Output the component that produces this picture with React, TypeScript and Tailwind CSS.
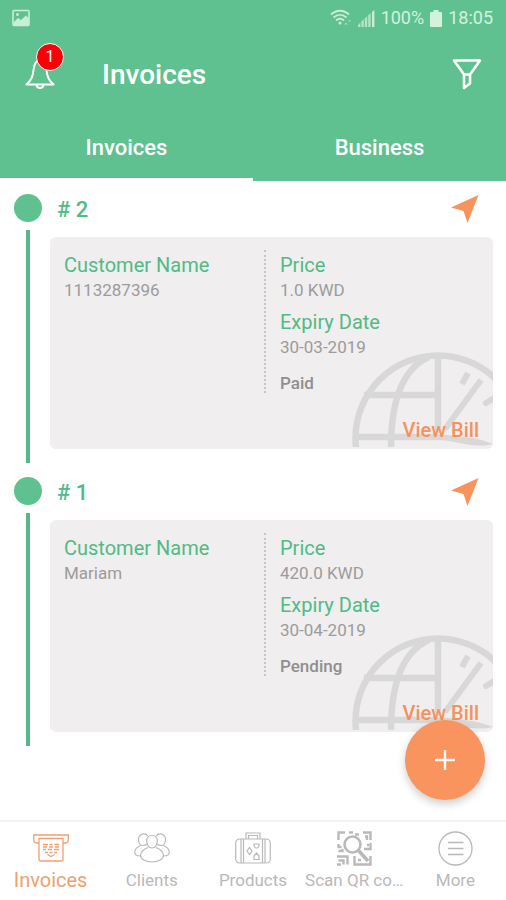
import { useState, type ReactNode } from "react";

type Invoice = {
  id: number;
  customer: string;
  price: string;
  expiry: string;
  status: string;
};

const invoices: Invoice[] = [
  { id: 2, customer: "1113287396", price: "1.0 KWD", expiry: "30-03-2019", status: "Paid" },
  { id: 1, customer: "Mariam", price: "420.0 KWD", expiry: "30-04-2019", status: "Pending" },
];

function PictureIcon() {
  return (
    <svg width="18" height="18" viewBox="0 0 18 18" fill="none" aria-hidden="true">
      <rect x="1" y="1.5" width="16" height="15" rx="1" stroke="#c9eed6" strokeWidth="1.6" />
      <path d="M2 13l4-4 3 2 5-4.500 3 3V16H2z" fill="#c9eed6" />
      <circle cx="5.500" cy="5.500" r="1.500" fill="#c9eed6" />
    </svg>
  );
}

function WifiIcon() {
  return (
    <svg width="22" height="18" viewBox="0 0 22 18" fill="none" stroke="#c9eed6" strokeWidth="1.800" aria-hidden="true">
      <path d="M1 5.500C6.500.500 13.500.500 19 5.500" />
      <path d="M3.500 8.500C7.500 5 12.500 5 16.500 8.500" />
      <path d="M6 11.500C8.500 9.300 11.500 9.300 14 11.500" />
      <circle cx="10" cy="14" r="1.500" fill="#c9eed6" stroke="none" />
      <path d="M14 15.500l2-2 2 2zM18 12.500h3l-1.500-2z" fill="#a4dcb9" stroke="none" />
    </svg>
  );
}

function SignalIcon() {
  return (
    <svg width="17" height="17" viewBox="0 0 17 17" fill="#b4e4c6" aria-hidden="true">
      <path d="M0 17v-2l2.400-2.400V17zM3.400 17v-5.400l2.400-2.400V17zM6.800 17V8.600l2.400-2.400V17zM10.200 17V5.400L12.600 3v14z" />
      <path d="M14 17V2l2.400-2v17z" fill="#c9eed6" />
    </svg>
  );
}

function BatteryIcon() {
  return (
    <svg width="12" height="17" viewBox="0 0 12 17" fill="#d2f2dd" aria-hidden="true">
      <path d="M3.500 0h5v2H11a1 1 0 0 1 1 1v13a1 1 0 0 1-1 1H1a1 1 0 0 1-1-1V3a1 1 0 0 1 1-1h2.500z" />
    </svg>
  );
}

function BellIcon() {
  return (
    <svg width="30" height="32" viewBox="0 0 30 32" fill="none" stroke="#fff" strokeWidth="2" strokeLinejoin="round" aria-hidden="true">
      <path d="M15 1C10 1.500 9 6 8.500 11c-.500 7-2.500 10-7 14.500h27c-4.500-4.500-6.500-7.500-7-14.500-.500-5-1.500-9.500-6.500-10z" />
      <path d="M11.500 26c.500 4 6.500 4 7 0" />
    </svg>
  );
}

function FunnelIcon() {
  return (
    <svg width="30" height="32" viewBox="0 0 30 32" fill="none" stroke="#fff" strokeWidth="2.600" strokeLinejoin="round" aria-hidden="true">
      <path d="M2 1.500h26L18 15.500h-6z" />
      <path d="M12 15.500v13.500l6-4.500v-9" />
    </svg>
  );
}

function SendIcon() {
  return (
    <svg width="28" height="28" viewBox="0 0 28 28" fill="#f8935c" aria-hidden="true">
      <path d="M27.500 0L16.500 28 12.500 16 0 12.500z" />
    </svg>
  );
}

function GlobeArt() {
  return (
    <svg
      className="pointer-events-none absolute right-0 bottom-0.5"
      width="142"
      height="95"
      viewBox="0 0 142 95"
      fill="none"
      stroke="#d9d8d9"
      strokeWidth="6.500"
      aria-hidden="true"
    >
      <circle cx="87" cy="86" r="82.500" />
      <path d="M87 4v77M13 43h74M5 85h82" />
      <path d="M78 5C48 18 40 58 40 96" />
      <path d="M130 28L94 77" strokeWidth="6" />
      <path d="M117 21l-6 11" strokeWidth="6" />
      <path d="M135 51l8-5" strokeWidth="6" strokeLinecap="round" />
      <path d="M86 82c20 2 40 3 56 10-20 5-38-4-56-4z" fill="#d9d8d9" stroke="none" />
    </svg>
  );
}

function InvoiceNavIcon() {
  return (
    <svg width="36" height="28" viewBox="0 0 36 28" fill="none" stroke="currentColor" strokeWidth="1.300" aria-hidden="true">
      <path d="M6 9H3.500C1.500 9 .700 7.500 .700 5V1h34.600v4c0 2.500-.800 4-2.800 4H30" />
      <path d="M5.500 4.500h25M6 4.500v21a1.500 1.500 0 0 0 1.500 1.500h21a1.500 1.500 0 0 0 1.500-1.500v-21" />
      <path d="M10 10.500h5m1.500 0h3m2 0h4.500M10 13h4m2 0h4m2 0h4M10 15.500h3m2 0h4m2 0h5M12 18.500h3m1.500 0h3m1.500 0h3" />
      <path d="M14.500 20.500l3.500 2 3.500-2" />
    </svg>
  );
}

function ClientsIcon() {
  return (
    <svg width="36" height="30" viewBox="0 0 36 30" fill="none" stroke="currentColor" strokeWidth="1.200" aria-hidden="true">
      <path d="M18 2.500c4 0 5.500 2.500 5.300 5.500-.300 4-2.300 7-5.300 7s-5-3-5.300-7c-.200-3 1.300-5.500 5.300-5.500z" />
      <path d="M14 3C11.500-.500 4.500.500 4.500 6c0 3.500 1.500 6.500 4 6.500 2 0 3.500-.500 5-1.500M22 3c2.500-3.500 9.500-2.500 9.500 3 0 3.500-1.500 6.500-4 6.500-2 0-3.500-.500-5-1.500" />
      <path d="M14 14.500c-3.500 1.500-7.500 4-7.500 8 0 3.500 5 6.500 11.500 6.500s11.500-3 11.500-6.500c0-4-4-6.500-7.500-8" />
      <path d="M6.500 12.500C3 14 .700 16.500 .700 19.500c0 2.500 3 3.500 6 3.500M29.500 12.500c3.500 1.500 5.800 4 5.800 7 0 2.500-3 3.500-6 3.500" />
    </svg>
  );
}

function ProductsIcon() {
  return (
    <svg width="36" height="32" viewBox="0 0 36 32" fill="none" stroke="currentColor" strokeWidth="1.200" aria-hidden="true">
      <rect x=".700" y="7" width="34.600" height="24" rx="4" />
      <path d="M6 7v24M8.500 7v24M27.500 7v24M30 7v24" />
      <path d="M11 7V1h14v6M13.500 7V3.500h9V7" />
      <path d="M14.500 15.500l2.500 3.500-2.500 3.500L12 19zM19 12h5v2l-1.500 2h-2L19 14zM19 24l2.500-3 2.500 3v3.500h-5z" />
    </svg>
  );
}

function QrIcon() {
  return (
    <svg width="35" height="35" viewBox="0 0 35 35" fill="none" stroke="currentColor" strokeWidth="2.400" aria-hidden="true">
      <path d="M1.500 9V1.500H8M12 1.500h4M18 3.500h4M26 1.500h7.500V9M28 5.500h2V9M1.500 13v3h3M1.500 20h4v-2M33.500 12v6H27M30 14h2" />
      <path d="M0 25.500h10.500V33.500M0 33.500h4M1.500 29.500h5v4M17.500 25v8.500h16V25M21 29h3" />
      <circle cx="15.500" cy="13.500" r="8" strokeWidth="2.600" />
      <path d="M21 19l10 11" strokeWidth="3.600" />
    </svg>
  );
}

function MoreIcon() {
  return (
    <svg width="35" height="35" viewBox="0 0 35 35" fill="none" stroke="currentColor" strokeWidth="1.300" aria-hidden="true">
      <circle cx="17.500" cy="17.500" r="16.500" />
      <path d="M10 11.500h15.500M10 17.500h15.500M10 23.500h15.500" />
    </svg>
  );
}

function Field({ label, value }: { label: string; value: string }) {
  return (
    <div>
      <dt className="text-xl leading-[30px] text-[#50bb86]">{label}</dt>
      <dd className="text-[17px] leading-5 text-[#9c9b9c]">{value}</dd>
    </div>
  );
}

function InvoiceItem({ invoice }: { invoice: Invoice }) {
  return (
    <li className="flex pr-[13px]">
      <div className="flex w-[50px] shrink-0 flex-col gap-2 pt-[13px] pl-3.5 pb-px">
        <span className="size-7 rounded-full bg-[#5fc190]" />
        <span className="ml-3 w-1 flex-1 bg-[#55b886]" />
      </div>
      <article className="min-w-0 flex-1 pb-[15px]">
        <header className="flex h-14 items-center justify-between pr-3.5 pl-[7px]">
          <h2 className="text-[22px] font-medium text-[#50bb86]"># {invoice.id}</h2>
          <button type="button" aria-label={`Send invoice ${invoice.id}`}>
            <SendIcon />
          </button>
        </header>
        <div className="relative h-[212px] overflow-hidden rounded-md bg-[#f0eeef] px-3.5 pt-[13px]">
          <GlobeArt />
          <dl className="relative flex">
            <div className="w-[200px] shrink-0">
              <Field label="Customer Name" value={invoice.customer} />
            </div>
            <div className="flex-1 border-l-2 border-dotted border-[#c6c5c6] pl-3.5">
              <Field label="Price" value={invoice.price} />
              <div className="mt-[7px]">
                <Field label="Expiry Date" value={invoice.expiry} />
              </div>
              <dd className="mt-4 text-[17px] leading-5 font-medium text-[#8f8e8f]">{invoice.status}</dd>
            </div>
          </dl>
          <a href="#bill" className="absolute right-3.5 bottom-[7px] text-xl leading-6 font-medium text-[#f5925c]">
            View Bill
          </a>
        </div>
      </article>
    </li>
  );
}

const navItems: { label: string; short?: string; icon: ReactNode }[] = [
  { label: "Invoices", icon: <InvoiceNavIcon /> },
  { label: "Clients", icon: <ClientsIcon /> },
  { label: "Products", icon: <ProductsIcon /> },
  { label: "Scan QR code", short: "Scan QR co…", icon: <QrIcon /> },
  { label: "More", icon: <MoreIcon /> },
];

export default function App() {
  const [tab, setTab] = useState("Invoices");
  const [section, setSection] = useState("Invoices");

  return (
    <div className="relative flex h-screen flex-col bg-white font-[Roboto,sans-serif]">
      <header className="bg-[#5fc190] text-white">
        <div className="flex h-9 items-center justify-between pr-[13px] pl-3 text-lg text-[#d2f2dd]">
          <PictureIcon />
          <div className="flex items-center gap-1.5">
            <WifiIcon />
            <SignalIcon />
            <span>100%</span>
            <BatteryIcon />
            <span>18:05</span>
          </div>
        </div>
        <div className="flex h-[78px] items-center justify-between pr-6 pl-[25px]">
          <div className="flex items-center gap-[47px]">
            <button type="button" aria-label="Notifications" className="relative">
              <BellIcon />
              <span className="absolute -top-4 left-[11px] flex size-7 items-center justify-center rounded-full border border-white bg-[#fb0007] text-base">
                1
              </span>
            </button>
            <h1 className="text-[28px] leading-8 font-medium">Invoices</h1>
          </div>
          <button type="button" aria-label="Filter">
            <FunnelIcon />
          </button>
        </div>
        <div role="tablist" className="grid h-[67px] grid-cols-2">
          {["Invoices", "Business"].map((name) => (
            <button
              key={name}
              type="button"
              role="tab"
              aria-selected={tab === name}
              onClick={() => setTab(name)}
              className={`border-b-[3px] pt-0.5 text-[22px] font-medium ${tab === name ? "border-white" : "border-transparent"}`}
            >
              {name}
            </button>
          ))}
        </div>
      </header>

      <main className="min-h-0 flex-1 overflow-y-auto">
        <ul>
          {invoices.map((invoice) => (
            <InvoiceItem key={invoice.id} invoice={invoice} />
          ))}
        </ul>
      </main>

      <button
        type="button"
        aria-label="Add invoice"
        className="absolute right-[21px] bottom-[100px] flex size-20 items-center justify-center rounded-full bg-[#f9945e] shadow-[0_4px_8px_rgba(0,0,0,0.2)]"
      >
        <svg width="20" height="20" viewBox="0 0 20 20" stroke="#fff" strokeWidth="2.400" aria-hidden="true">
          <path d="M10 0v20M0 10h20" />
        </svg>
      </button>

      <nav className="grid h-20 grid-cols-5 border-t-2 border-[#f3f3f3] bg-white">
        {navItems.map(({ label, short, icon }) => (
          <button
            key={label}
            type="button"
            aria-label={label}
            onClick={() => setSection(label)}
            className={`flex min-w-0 flex-col items-center pt-2 ${
              section === label ? "text-xl text-[#f0a070]" : "text-[17px] text-[#b9b9b9]"
            }`}
          >
            <span className="flex h-[38px] items-center pb-0.5">{icon}</span>
            <span className="leading-6 whitespace-nowrap">{short ?? label}</span>
          </button>
        ))}
      </nav>
    </div>
  );
}
